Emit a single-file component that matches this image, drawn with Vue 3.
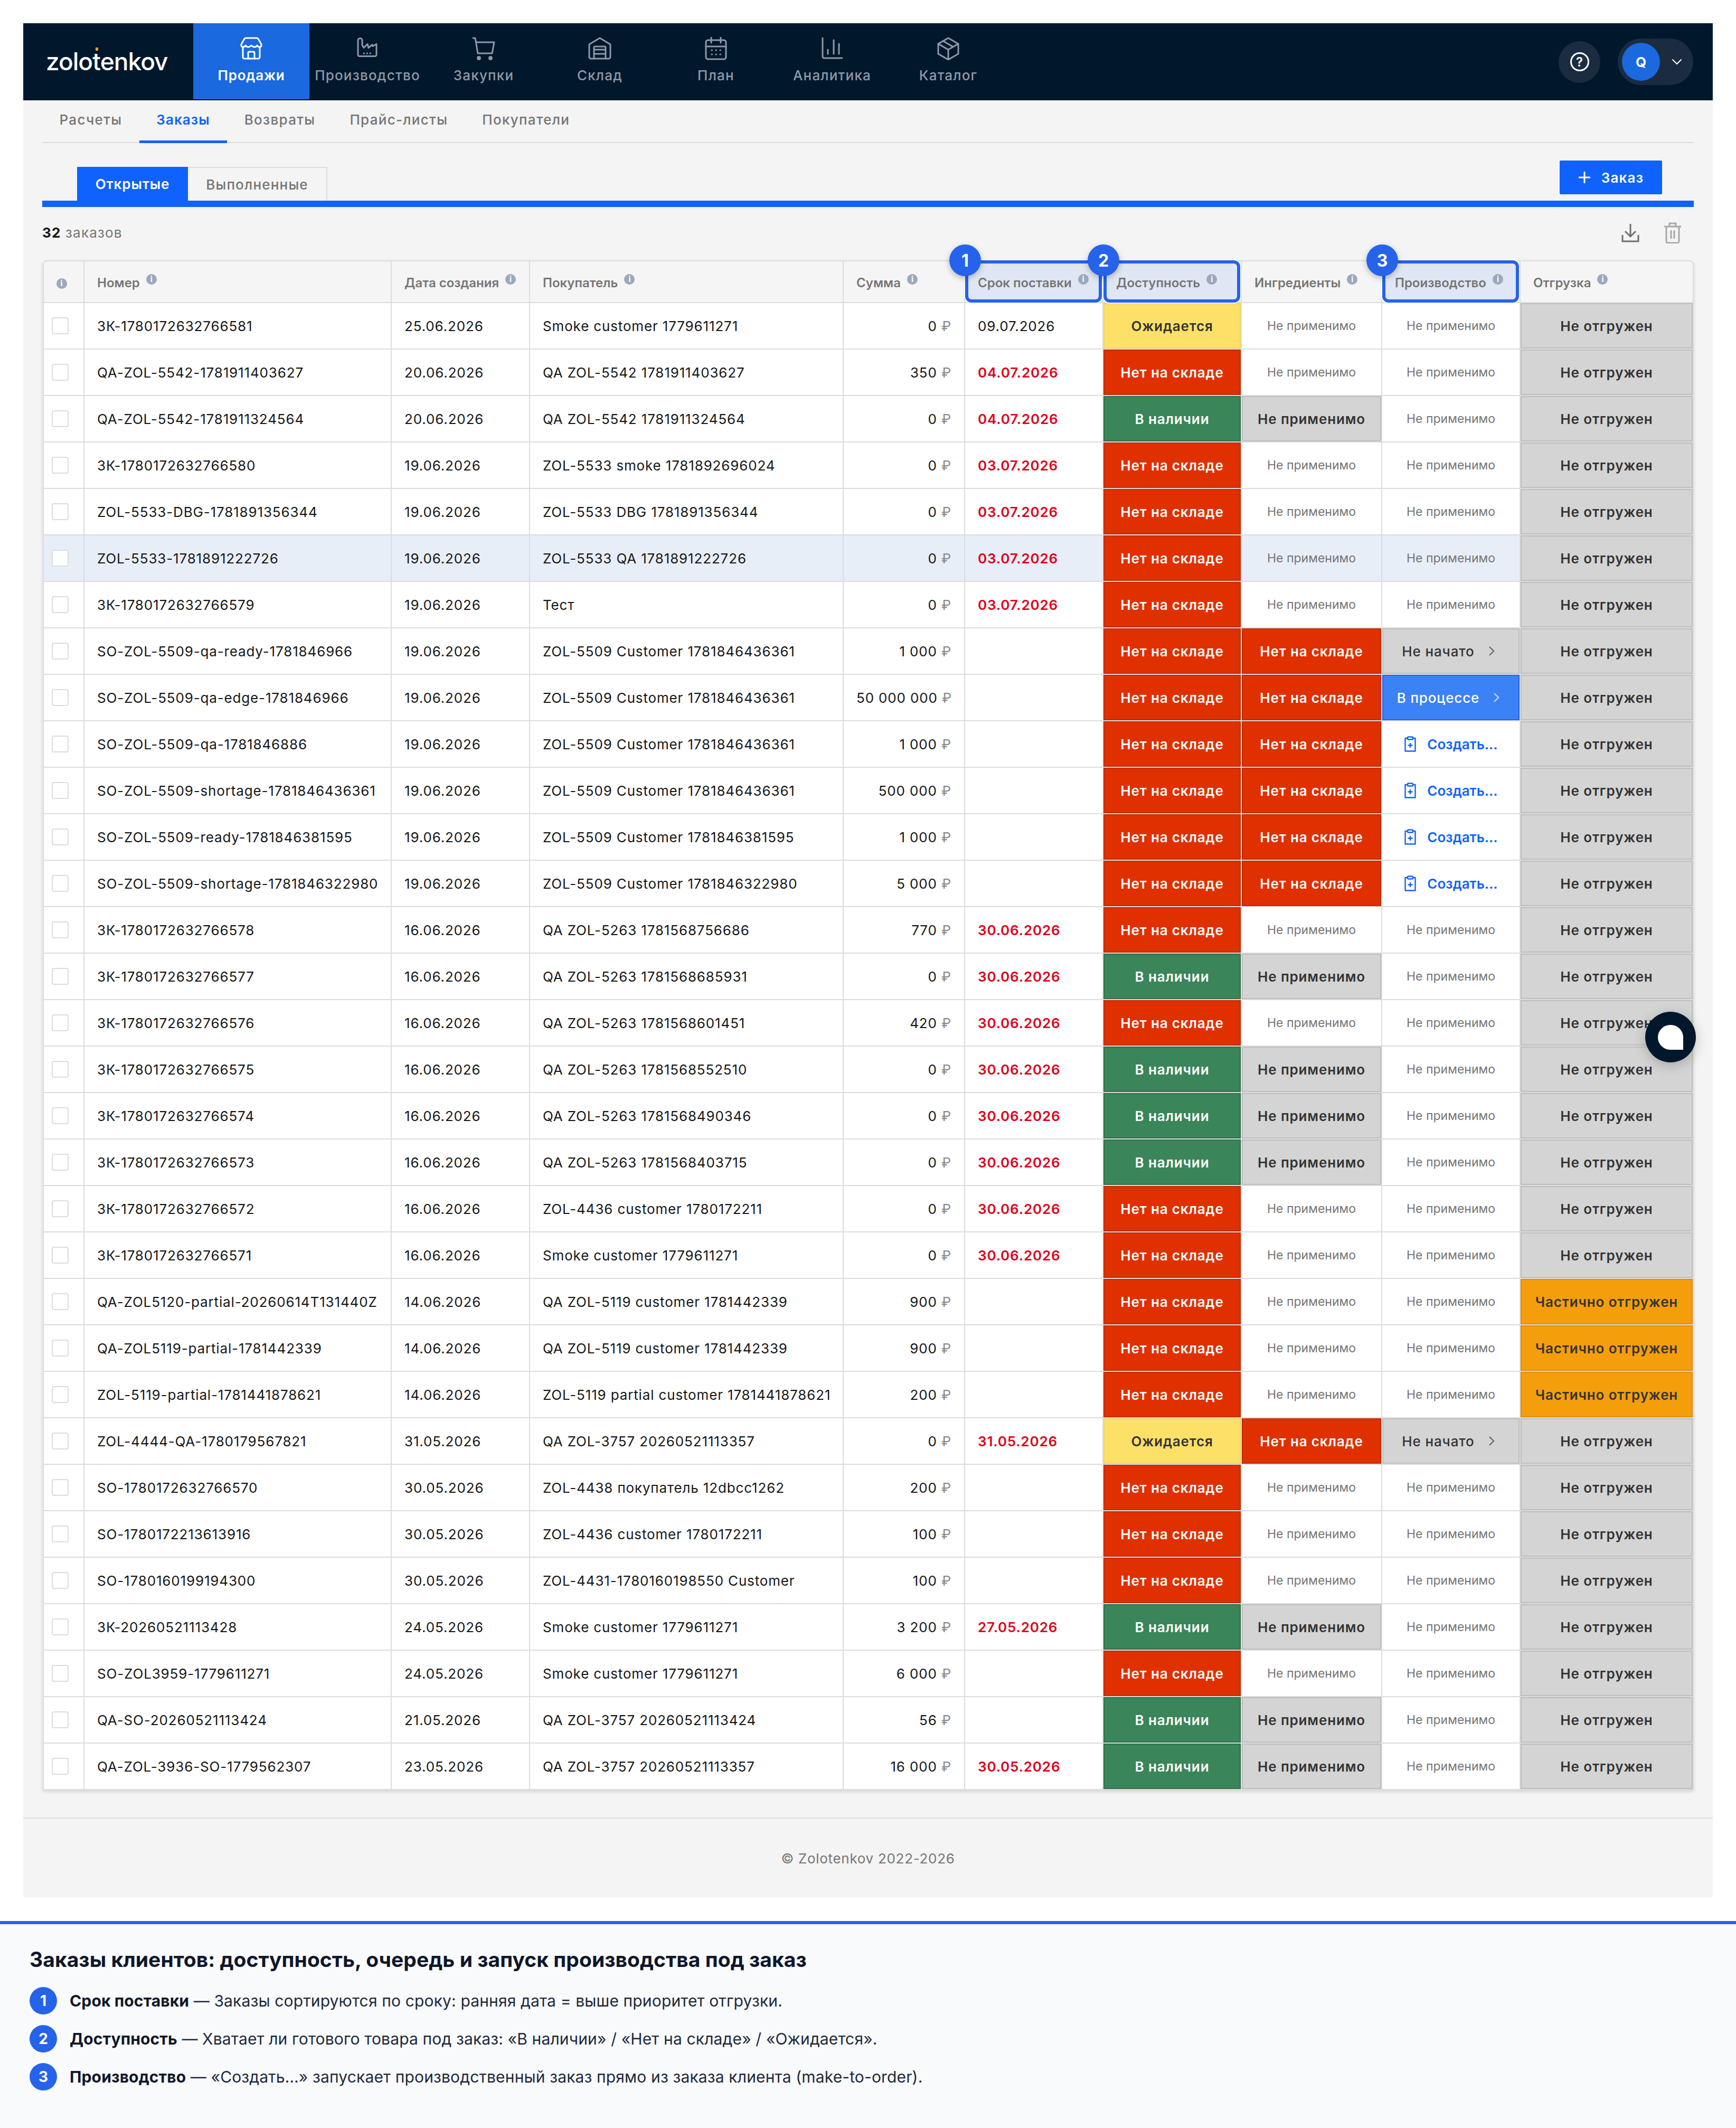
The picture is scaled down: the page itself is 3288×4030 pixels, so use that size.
<template>
  <div class="app">
    <div class="shell">
      <!-- верхняя панель -->
      <header class="topbar">
        <div class="logo">zolo<span class="logo-t">t<i class="logo-dot"></i></span>enkov</div>
        <nav class="nav">
          <a v-for="item in navItems" :key="item.label" class="nav-item" :class="{ active: item.active }">
            <svg class="nav-icon" viewBox="0 0 44 44" fill="none" stroke="currentColor" stroke-width="3" stroke-linecap="round" stroke-linejoin="round">
              <g v-if="item.icon === 'store'">
                <path d="M12 2h20c2 0 3 1 4 3l5 9c1 3-1 5-3 5-3 0-4-1-5-3-1 2-3 3-5 3s-4-1-6-3c-2 2-4 3-6 3s-4-1-5-3c-1 2-2 3-5 3-2 0-4-2-3-5l5-9c1-2 2-3 4-3z" />
                <path d="M6 20v18a3 3 0 0 0 3 3h26a3 3 0 0 0 3-3V20" />
                <path d="M16 41V30a2 2 0 0 1 2-2h8a2 2 0 0 1 2 2v11" />
              </g>
              <g v-else-if="item.icon === 'factory'">
                <path d="M4 6.5a4 4 0 0 1 8 0v9l3 5 7-7 2 7 7-6 1 3 7-4v20a3 3 0 0 1-3 3H7a3 3 0 0 1-3-3z" />
                <path d="M15 31h.5M21 31h.5M27 31h.5" />
              </g>
              <g v-else-if="item.icon === 'cart'">
                <path d="M2 2h4l5 29h27l4-21H9" />
                <circle cx="13" cy="40" r="2.4" fill="currentColor" />
                <circle cx="35" cy="40" r="2.4" fill="currentColor" />
              </g>
              <g v-else-if="item.icon === 'store2'">
                <path d="M2 14 22 2l20 12v24a3 3 0 0 1-3 3H5a3 3 0 0 1-3-3z" />
                <path d="M11 41V20a2 2 0 0 1 2-2h18a2 2 0 0 1 2 2v21M11 24h22M11 32h22" />
              </g>
              <g v-else-if="item.icon === 'calendar'">
                <rect x="3" y="6" width="38" height="36" rx="4" />
                <path d="M3 18h38M13 1v10M31 1v10" />
                <path d="M14 25h.5M22 25h.5M30 25h.5M14 33h.5M22 33h.5M30 33h.5" />
              </g>
              <g v-else-if="item.icon === 'chart'">
                <path d="M4 2v35a3 3 0 0 0 3 3h34" />
                <path d="M14 24v8M25 6v26M35 13v19" />
              </g>
              <g v-else>
                <path d="M22 2 41 13v19L22 43 3 32V13z" />
                <path d="M3 13l19 11 19-11M22 24v19M12 7.5l19 11" />
              </g>
            </svg>
            <span>{{ item.label }}</span>
          </a>
        </nav>
        <div class="top-right">
          <button class="help"><span class="help-ring">?</span></button>
          <div class="user">
            <span class="avatar">Q</span>
            <svg class="chev" viewBox="0 0 20 12" fill="none" stroke="currentColor" stroke-width="2" stroke-linecap="round"><path d="M2 2l8 8 8-8" /></svg>
          </div>
        </div>
      </header>

      <main class="content">
        <div class="subtabs">
          <a v-for="t in subTabs" :key="t" class="subtab" :class="{ active: t === 'Заказы' }">{{ t }}</a>
        </div>

        <div class="tabs-row">
          <div class="tabs">
            <span class="tab active">Открытые</span>
            <span class="tab">Выполненные</span>
          </div>
          <button class="add-btn">
            <svg viewBox="0 0 24 24" width="24" height="24" fill="none" stroke="#fff" stroke-width="3"><path d="M12 1v22M1 12h22" /></svg>
            Заказ
          </button>
        </div>

        <div class="count-row">
          <div class="count"><b>32</b> заказов</div>
          <div class="actions">
            <svg viewBox="0 0 34 36" width="34" height="36" fill="none" stroke="#6f6f6f" stroke-width="3"><path d="M17 1v24M7 15l10 10 10-10" /><path d="M2 22v12h30V22" /></svg>
            <svg viewBox="0 0 34 40" width="34" height="40" fill="none" stroke="#a8a8a8" stroke-width="3"><path d="M1 8h32M11 8V2h12v6M5 8v28a3 3 0 0 0 3 3h18a3 3 0 0 0 3-3V8M14 15v16M20 15v16" /></svg>
          </div>
        </div>

        <table class="orders">
          <colgroup>
            <col v-for="n in 10" :key="n" :class="'c' + n" />
          </colgroup>
          <thead>
            <tr>
              <th class="check-th"><span class="info">i</span></th>
              <th v-for="h in headers" :key="h.label" :class="{ marked: h.mark }">
                <template v-if="h.mark">
                  <span class="mark-box"></span>
                  <span class="mark-num">{{ h.mark }}</span>
                </template>
                <span class="th-text">{{ h.label }}</span><span class="info up">i</span>
              </th>
            </tr>
          </thead>
          <tbody>
            <tr v-for="(r, i) in rows" :key="r[0]" :class="{ hovered: i === 5 }">
              <td class="check-td"><span class="check"></span></td>
              <td>{{ r[0] }}</td>
              <td>{{ r[1] }}</td>
              <td>{{ r[2] }}</td>
              <td class="sum">
                <template v-if="r[3]">{{ r[3] }} <span class="rub">₽</span></template>
              </td>
              <td class="due" :class="{ late: i > 0 }">{{ r[4] }}</td>
              <td class="st-td"><div class="st" :class="avail[r[5]].cls">{{ avail[r[5]].text }}</div></td>
              <td class="st-td">
                <div v-if="r[6] === 1" class="st red">Нет на складе</div>
                <div v-else-if="r[5] === 'g'" class="st grey">Не применимо</div>
                <div v-else class="na">Не применимо</div>
              </td>
              <td class="st-td">
                <div v-if="r[7] === 'n'" class="st grey flow thin">Не начато <svg viewBox="0 0 12 20" width="12" height="20" fill="none" stroke="#6a6a6a" stroke-width="2.4"><path d="M2 2l8 8-8 8" /></svg></div>
                <div v-else-if="r[7] === 'p'" class="st blue flow thin">В процессе <svg viewBox="0 0 12 20" width="12" height="20" fill="none" stroke="#c5d9fb" stroke-width="2.4"><path d="M2 2l8 8-8 8" /></svg></div>
                <div v-else-if="r[7] === 'c'" class="create">
                  <svg viewBox="0 0 24 30" width="24" height="30" fill="none" stroke="#0f62fe" stroke-width="2.4" stroke-linejoin="round"><path d="M7 4H2.5v24.5h19V4H17" /><rect x="7" y="1.5" width="10" height="5" rx="1.5" /><path d="M12 13v9M7.5 17.5h9" /></svg>
                  Создать…
                </div>
                <div v-else class="na">Не применимо</div>
              </td>
              <td class="st-td">
                <div v-if="r[8]" class="st orange">Частично отгружен</div>
                <div v-else class="st grey">Не отгружен</div>
              </td>
            </tr>
          </tbody>
        </table>
      </main>

      <footer class="foot">© Zolotenkov 2022-2026</footer>
    </div>

    <button class="chat"><span class="chat-bubble"></span></button>

    <section class="notes">
      <h2>Заказы клиентов: доступность, очередь и запуск производства под заказ</h2>
      <div v-for="(n, i) in notes" :key="n.title" class="note">
        <span class="note-num">{{ i + 1 }}</span>
        <p><b>{{ n.title }}</b> — {{ n.text }}</p>
      </div>
    </section>
  </div>
</template>

<script setup>
const navItems = [
  { label: 'Продажи', icon: 'store', active: true },
  { label: 'Производство', icon: 'factory' },
  { label: 'Закупки', icon: 'cart' },
  { label: 'Склад', icon: 'store2' },
  { label: 'План', icon: 'calendar' },
  { label: 'Аналитика', icon: 'chart' },
  { label: 'Каталог', icon: 'box' }
]

const subTabs = ['Расчеты', 'Заказы', 'Возвраты', 'Прайс-листы', 'Покупатели']

const headers = [
  { label: 'Номер' },
  { label: 'Дата создания' },
  { label: 'Покупатель' },
  { label: 'Сумма' },
  { label: 'Срок поставки', mark: 1 },
  { label: 'Доступность', mark: 2 },
  { label: 'Ингредиенты' },
  { label: 'Производство', mark: 3 },
  { label: 'Отгрузка' }
]

const avail = {
  y: { text: 'Ожидается', cls: 'yellow' },
  r: { text: 'Нет на складе', cls: 'red' },
  g: { text: 'В наличии', cls: 'green' }
}

// номер, дата, покупатель, сумма, срок, доступность, ингредиенты, производство, частично
const rows = [
  ['ЗК-1780172632766581', '25.06.2026', 'Smoke customer 1779611271', '0', '09.07.2026', 'y'],
  ['QA-ZOL-5542-1781911403627', '20.06.2026', 'QA ZOL-5542 1781911403627', '350', '04.07.2026', 'r'],
  ['QA-ZOL-5542-1781911324564', '20.06.2026', 'QA ZOL-5542 1781911324564', '0', '04.07.2026', 'g'],
  ['ЗК-1780172632766580', '19.06.2026', 'ZOL-5533 smoke 1781892696024', '0', '03.07.2026', 'r'],
  ['ZOL-5533-DBG-1781891356344', '19.06.2026', 'ZOL-5533 DBG 1781891356344', '0', '03.07.2026', 'r'],
  ['ZOL-5533-1781891222726', '19.06.2026', 'ZOL-5533 QA 1781891222726', '0', '03.07.2026', 'r'],
  ['ЗК-1780172632766579', '19.06.2026', 'Тест', '0', '03.07.2026', 'r'],
  ['SO-ZOL-5509-qa-ready-1781846966', '19.06.2026', 'ZOL-5509 Customer 1781846436361', '1 000', '', 'r', 1, 'n'],
  ['SO-ZOL-5509-qa-edge-1781846966', '19.06.2026', 'ZOL-5509 Customer 1781846436361', '50 000 000', '', 'r', 1, 'p'],
  ['SO-ZOL-5509-qa-1781846886', '19.06.2026', 'ZOL-5509 Customer 1781846436361', '1 000', '', 'r', 1, 'c'],
  ['SO-ZOL-5509-shortage-1781846436361', '19.06.2026', 'ZOL-5509 Customer 1781846436361', '500 000', '', 'r', 1, 'c'],
  ['SO-ZOL-5509-ready-1781846381595', '19.06.2026', 'ZOL-5509 Customer 1781846381595', '1 000', '', 'r', 1, 'c'],
  ['SO-ZOL-5509-shortage-1781846322980', '19.06.2026', 'ZOL-5509 Customer 1781846322980', '5 000', '', 'r', 1, 'c'],
  ['ЗК-1780172632766578', '16.06.2026', 'QA ZOL-5263 1781568756686', '770', '30.06.2026', 'r'],
  ['ЗК-1780172632766577', '16.06.2026', 'QA ZOL-5263 1781568685931', '0', '30.06.2026', 'g'],
  ['ЗК-1780172632766576', '16.06.2026', 'QA ZOL-5263 1781568601451', '420', '30.06.2026', 'r'],
  ['ЗК-1780172632766575', '16.06.2026', 'QA ZOL-5263 1781568552510', '0', '30.06.2026', 'g'],
  ['ЗК-1780172632766574', '16.06.2026', 'QA ZOL-5263 1781568490346', '0', '30.06.2026', 'g'],
  ['ЗК-1780172632766573', '16.06.2026', 'QA ZOL-5263 1781568403715', '0', '30.06.2026', 'g'],
  ['ЗК-1780172632766572', '16.06.2026', 'ZOL-4436 customer 1780172211', '0', '30.06.2026', 'r'],
  ['ЗК-1780172632766571', '16.06.2026', 'Smoke customer 1779611271', '0', '30.06.2026', 'r'],
  ['QA-ZOL5120-partial-20260614T131440Z', '14.06.2026', 'QA ZOL-5119 customer 1781442339', '900', '', 'r', 0, '', 1],
  ['QA-ZOL5119-partial-1781442339', '14.06.2026', 'QA ZOL-5119 customer 1781442339', '900', '', 'r', 0, '', 1],
  ['ZOL-5119-partial-1781441878621', '14.06.2026', 'ZOL-5119 partial customer 1781441878621', '200', '', 'r', 0, '', 1],
  ['ZOL-4444-QA-1780179567821', '31.05.2026', 'QA ZOL-3757 20260521113357', '0', '31.05.2026', 'y', 1, 'n'],
  ['SO-1780172632766570', '30.05.2026', 'ZOL-4438 покупатель 12dbcc1262', '200', '', 'r'],
  ['SO-1780172213613916', '30.05.2026', 'ZOL-4436 customer 1780172211', '100', '', 'r'],
  ['SO-1780160199194300', '30.05.2026', 'ZOL-4431-1780160198550 Customer', '100', '', 'r'],
  ['ЗК-20260521113428', '24.05.2026', 'Smoke customer 1779611271', '3 200', '27.05.2026', 'g'],
  ['SO-ZOL3959-1779611271', '24.05.2026', 'Smoke customer 1779611271', '6 000', '', 'r'],
  ['QA-SO-20260521113424', '21.05.2026', 'QA ZOL-3757 20260521113424', '56', '', 'g'],
  ['QA-ZOL-3936-SO-1779562307', '23.05.2026', 'QA ZOL-3757 20260521113357', '16 000', '30.05.2026', 'g']
]

const notes = [
  { title: 'Срок поставки', text: 'Заказы сортируются по сроку: ранняя дата = выше приоритет отгрузки.' },
  { title: 'Доступность', text: 'Хватает ли готового товара под заказ: «В наличии» / «Нет на складе» / «Ожидается».' },
  { title: 'Производство', text: '«Создать…» запускает производственный заказ прямо из заказа клиента (make-to-order).' }
]
</script>

<style scoped>
* {
  box-sizing: border-box;
}

.app {
  position: relative;
  width: 3288px;
  height: 4030px;
  background: #fff;
  padding-top: 44px;
  font-family: Inter, 'Noto Sans', sans-serif;
  color: #161616;
  overflow: hidden;
}

.shell {
  margin: 0 44px;
  height: 3549px;
  background: #f4f4f4;
}

/* верхняя панель */
.topbar {
  display: flex;
  height: 146px;
  background: #01172c;
}

.logo {
  width: 322px;
  padding: 41px 0 0 43px;
  color: #fff;
  font-size: 46px;
  line-height: 62px;
  font-weight: 500;
  letter-spacing: -1px;
}

.logo-t {
  position: relative;
}

.logo-dot {
  position: absolute;
  left: 6px;
  top: 2px;
  width: 5px;
  height: 6px;
  background: #e0a030;
}

.nav {
  display: flex;
  height: 144px;
}

.nav-item {
  display: flex;
  flex-direction: column;
  align-items: center;
  width: 220px;
  padding-top: 26px;
  color: #8e99a6;
  font-size: 26px;
  line-height: 32px;
  font-weight: 500;
  letter-spacing: 1.2px;
}

.nav-item.active {
  background: #1a69df;
  color: #fff;
  font-weight: 600;
  letter-spacing: 0.8px;
}

.nav-icon {
  width: 44px;
  height: 44px;
  margin-bottom: 13px;
}

.top-right {
  display: flex;
  align-items: center;
  gap: 33px;
  margin-left: auto;
  padding-right: 37px;
}

.help {
  display: flex;
  align-items: center;
  justify-content: center;
  width: 79px;
  height: 79px;
  border: 0;
  border-radius: 50%;
  background: #1b2c40;
}

.help-ring {
  display: flex;
  align-items: center;
  justify-content: center;
  width: 36px;
  height: 36px;
  border: 3px solid #fff;
  border-radius: 50%;
  color: #fff;
  font: 600 24px Inter, sans-serif;
}

.user {
  display: flex;
  align-items: center;
  width: 143px;
  height: 88px;
  padding-left: 8px;
  border-radius: 44px;
  background: #1b2c40;
}

.avatar {
  display: flex;
  align-items: center;
  justify-content: center;
  width: 72px;
  height: 72px;
  border-radius: 50%;
  background: #1a69df;
  color: #fff;
  font-size: 26px;
  font-weight: 700;
}

.chev {
  width: 20px;
  height: 12px;
  margin-left: 22px;
  color: #fff;
}

.content {
  padding: 0 36px;
}

/* подразделы */
.subtabs {
  display: flex;
  height: 81px;
  border-bottom: 2px solid #dcdcdc;
}

.subtab {
  height: 81px;
  padding: 21px 32.5px 0;
  color: #757575;
  font-size: 26px;
  line-height: 32px;
  font-weight: 500;
  letter-spacing: 1.3px;
}

.subtab.active {
  color: #0f62fe;
  font-weight: 600;
  letter-spacing: 1.1px;
  border-bottom: 5px solid #0f62fe;
}

.tabs-row {
  display: flex;
  align-items: flex-start;
  justify-content: space-between;
  height: 121px;
  padding: 33px 60px 0 66px;
  border-bottom: 12px solid #0f62fe;
}

.tabs {
  display: flex;
  margin-top: 12px;
}

.tab {
  display: flex;
  align-items: center;
  justify-content: center;
  width: 264px;
  height: 64px;
  border: 2px solid #dcdcdc;
  border-bottom: 0;
  border-left: 0;
  color: #757575;
  font-size: 26px;
  font-weight: 500;
  letter-spacing: 1.2px;
}

.tab.active {
  width: 210px;
  border: 0;
  background: #0f62fe;
  color: #fff;
  font-weight: 600;
  letter-spacing: 0.9px;
}

.add-btn {
  display: flex;
  align-items: center;
  justify-content: center;
  gap: 20px;
  width: 194px;
  height: 64px;
  border: 0;
  border-radius: 2px;
  background: #0f62fe;
  color: #fff;
  font: 600 26px Inter, sans-serif;
  letter-spacing: 1.2px;
}

.count-row {
  display: flex;
  align-items: center;
  justify-content: space-between;
  height: 101px;
  padding-bottom: 4px;
}

.count {
  color: #757575;
  font-size: 26px;
  letter-spacing: 1.2px;
}

.count b {
  color: #161616;
  font-weight: 700;
}

.actions {
  display: flex;
  align-items: center;
  gap: 46px;
  padding-right: 23px;
}

/* таблица заказов */
.orders {
  width: 3127px;
  margin-left: 1px;
  table-layout: fixed;
  border-collapse: separate;
  border-spacing: 0;
  border-radius: 8px 8px 0 0;
  box-shadow: 0 3px 6px rgba(0, 0, 0, 0.14);
  font-size: 26px;
  background: #fff;
}

.c1 { width: 79px; }
.c2 { width: 582px; }
.c3 { width: 262px; }
.c4 { width: 594px; }
.c5 { width: 230px; }
.c6 { width: 262px; }
.c7 { width: 262px; }
.c8 { width: 266px; }
.c9 { width: 262px; }
.c10 { width: 328px; }

.orders th {
  position: relative;
  height: 81px;
  padding: 4px 24px 0;
  border-top: 2px solid #dcdcdc;
  border-right: 2px solid #dcdcdc;
  border-bottom: 2px solid #dcdcdc;
  background: #f5f5f5;
  color: #757575;
  font-size: 24px;
  font-weight: 600;
  text-align: left;
  white-space: nowrap;
}

.orders th:first-child {
  border-left: 2px solid #dcdcdc;
  border-top-left-radius: 8px;
  padding: 0 8px 0 0;
  text-align: center;
}

.orders th:last-child {
  border-top-right-radius: 8px;
}

.th-text {
  position: relative;
}

.info {
  position: relative;
  display: inline-flex;
  align-items: center;
  justify-content: center;
  width: 20px;
  height: 20px;
  border-radius: 50%;
  background: #9ba8bd;
  color: #fff;
  font-size: 15px;
  font-weight: 700;
  line-height: 20px;
}

.info.up {
  top: -10px;
  margin-left: 12px;
}

.mark-box {
  position: absolute;
  left: 0;
  top: -2px;
  right: 1px;
  bottom: -1px;
  border: 6px solid #2563eb;
  border-radius: 12px;
  background: #e0e6f3;
  box-shadow: 0 0 0 2px rgba(255, 255, 255, 0.7);
}

.mark-num {
  position: absolute;
  z-index: 3;
  left: -30px;
  top: -32px;
  display: flex;
  align-items: center;
  justify-content: center;
  width: 60px;
  height: 60px;
  border-radius: 50%;
  background: #2563eb;
  box-shadow: 0 4px 12px rgba(0, 0, 0, 0.25);
  color: #fff;
  font-size: 32px;
  font-weight: 700;
}

.orders td {
  height: 88px;
  padding: 0 24px;
  border-right: 2px solid #dcdcdc;
  border-bottom: 2px solid #dcdcdc;
  background: #fff;
  white-space: nowrap;
  font-size: 26px;
  letter-spacing: 0.85px;
}

.hovered td {
  background: #e8eef8;
}

.orders td.check-td {
  padding: 0 0 0 15px;
  border-left: 2px solid #dcdcdc;
}

.check {
  display: block;
  width: 32px;
  height: 32px;
  border: 2px solid #dcdcdc;
  border-radius: 4px;
  background: #fff;
}

.orders td.sum {
  text-align: right;
}

.rub {
  color: #8a8a8a;
}

.due.late {
  color: #e0001a;
  font-weight: 600;
}

.orders td.st-td {
  padding: 0;
}

.st {
  display: flex;
  align-items: center;
  justify-content: center;
  height: 86px;
  border: 2px solid;
  font-size: 26px;
  font-weight: 600;
}

.red {
  background: #e03000;
  border-color: #c22b04;
  color: #fff;
}

.green {
  background: #3a8559;
  border-color: #2f6f4b;
  color: #fff;
}

.yellow {
  background: #fde068;
  border-color: #f2d560;
  color: #333;
}

.grey {
  background: #d4d4d4;
  border-color: #bebebe;
  color: #333;
}

.blue {
  background: #3b82f6;
  border-color: #2563eb;
  color: #fff;
}

.orange {
  background: #f59e0b;
  border-color: #dd8f0a;
  color: #333;
}

.flow {
  gap: 26px;
  padding-right: 10px;
}

.thin {
  font-weight: 500;
}

.na {
  color: #757575;
  font-size: 23px;
  letter-spacing: 0;
  text-align: center;
}

.create {
  display: flex;
  align-items: center;
  justify-content: center;
  gap: 20px;
  color: #0f62fe;
  font-size: 26px;
  font-weight: 600;
  letter-spacing: 0;
}

/* подвал */
.foot {
  margin-top: 52px;
  height: 153px;
  border-top: 2px solid #dcdcdc;
  padding-top: 60px;
  color: #757575;
  font-size: 26px;
  line-height: 32px;
  letter-spacing: 0.7px;
  text-align: center;
}

.chat {
  position: absolute;
  left: 3116px;
  top: 1916px;
  width: 96px;
  height: 96px;
  border: 0;
  border-radius: 50%;
  background: #01172c;
  box-shadow: 0 6px 24px rgba(0, 0, 0, 0.2);
}

.chat-bubble {
  display: block;
  width: 48px;
  height: 47px;
  margin: auto;
  border-radius: 24px 24px 0 24px;
  background: #fff;
}

/* пояснения */
.notes {
  margin-top: 45px;
  height: 392px;
  padding: 42px 56px 0;
  border-top: 6px solid #2563eb;
  background: #f8fafc;
  color: #0f172a;
}

.notes h2 {
  margin: 0 0 27px;
  font-size: 39px;
  line-height: 50px;
  font-weight: 700;
  letter-spacing: 0.04px;
}

.note {
  display: flex;
  align-items: center;
  gap: 24px;
  height: 52px;
  margin-bottom: 20px;
}

.note-num {
  display: flex;
  align-items: center;
  justify-content: center;
  width: 52px;
  height: 52px;
  border-radius: 50%;
  background: #2563eb;
  color: #fff;
  font-size: 28px;
  font-weight: 700;
}

.note p {
  margin: 0;
  font-size: 30px;
  letter-spacing: 0.14px;
  color: #1e293b;
}

.note b {
  color: #0f172a;
  font-weight: 700;
}
</style>

<style>
html,
body {
  margin: 0;
  background: #fff;
}
</style>
